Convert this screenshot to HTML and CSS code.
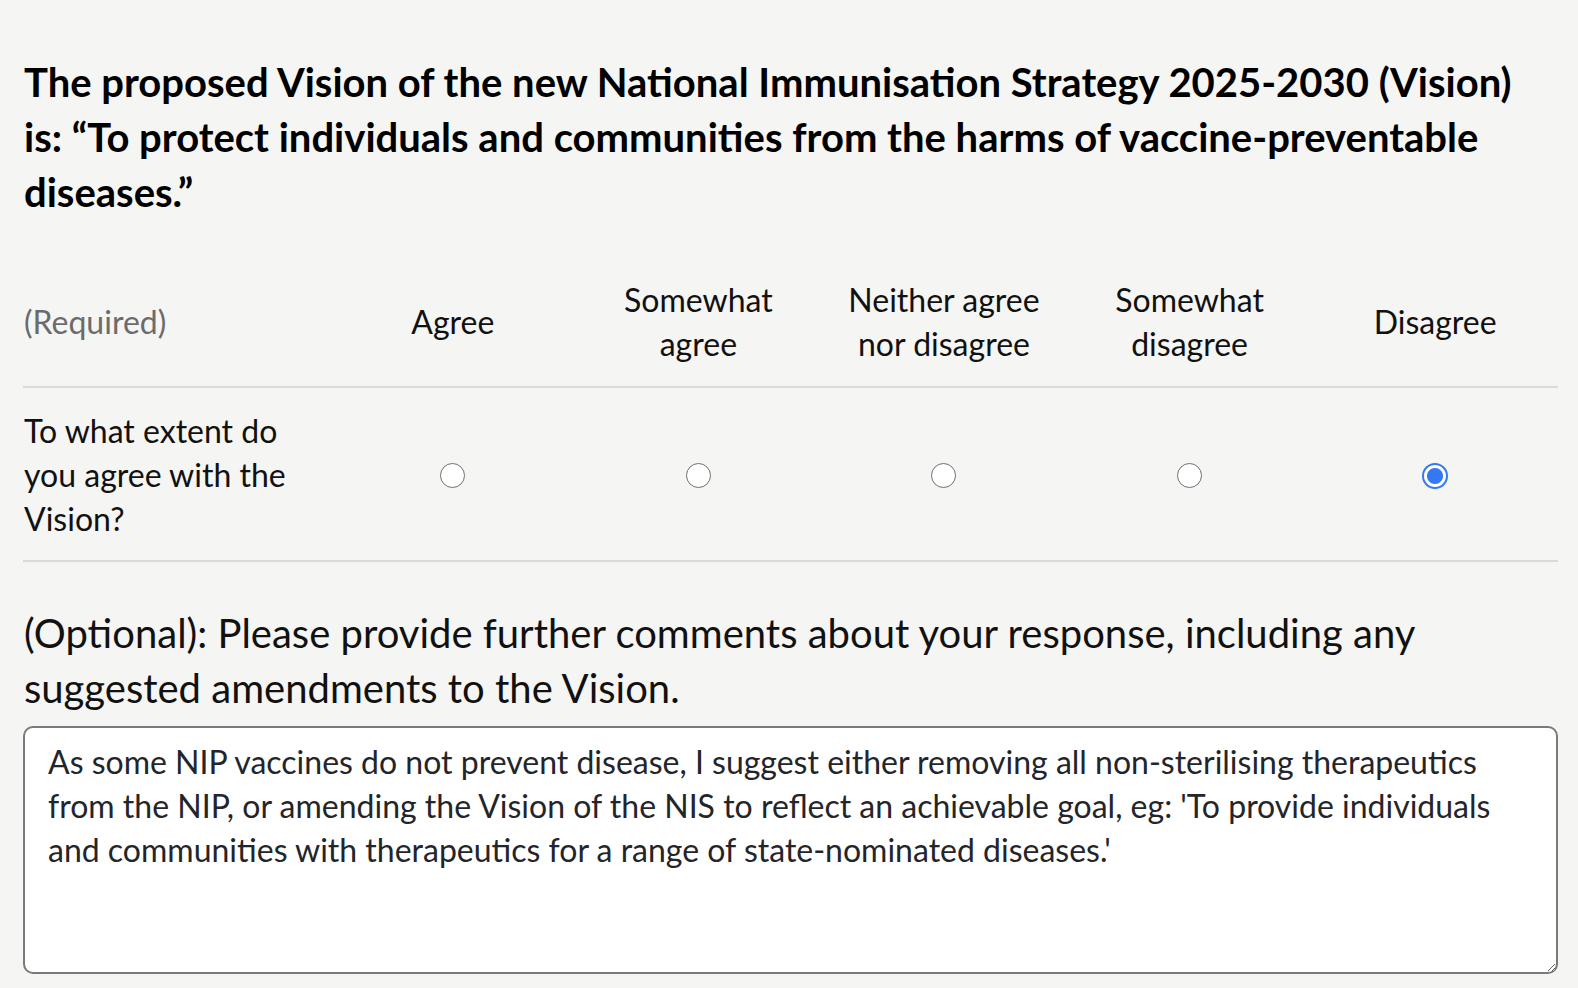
FILE: index.html
```html
<!DOCTYPE html>
<html lang="en">
<head>
<meta charset="utf-8">
<title>Vision question</title>
<link rel="stylesheet" href="styles.css">
</head>
<body>
<main class="question">
  <h2 class="question-title">The proposed Vision of the new National Immunisation Strategy 2025-2030 (Vision) is: “To protect individuals and communities from the harms of vaccine-preventable diseases.”</h2>

  <table class="likert">
    <colgroup>
      <col class="col-label">
      <col class="col-opt"><col class="col-opt"><col class="col-opt"><col class="col-opt"><col class="col-opt">
    </colgroup>
    <thead>
      <tr>
        <th class="req">(Required)</th>
        <th>Agree</th>
        <th>Somewhat<br>agree</th>
        <th>Neither agree<br>nor disagree</th>
        <th>Somewhat<br>disagree</th>
        <th>Disagree</th>
      </tr>
    </thead>
    <tbody>
      <tr>
        <td class="row-label">To what extent do you agree with the Vision?</td>
        <td><input class="radio" type="radio" name="vision" aria-label="Agree"></td>
        <td><input class="radio" type="radio" name="vision" aria-label="Somewhat agree"></td>
        <td><input class="radio" type="radio" name="vision" aria-label="Neither agree nor disagree"></td>
        <td><input class="radio" type="radio" name="vision" aria-label="Somewhat disagree"></td>
        <td><input class="radio" type="radio" name="vision" aria-label="Disagree" checked></td>
      </tr>
    </tbody>
  </table>

  <label class="comment-label" for="comments">(Optional): Please provide further comments about your response, including any suggested amendments to the Vision.</label>
  <textarea id="comments" class="comment-box">As some NIP vaccines do not prevent disease, I suggest either removing all non-sterilising therapeutics from the NIP, or amending the Vision of the NIS to reflect an achievable goal, eg: 'To provide individuals and communities with therapeutics for a range of state-nominated diseases.'</textarea>
</main>
</body>
</html>
```

FILE: styles.css
```css
html, body {
  margin: 0;
  padding: 0;
  background: #f5f5f3;
}

body {
  font-family: Lato, "Open Sans", sans-serif;
  color: #111;
}

.question {
  padding: 55px 20px 0 23px;
  display: flex;
  flex-direction: column;
}

.question-title {
  margin: 0 30px 38px 1px;
  font-size: 40px;
  line-height: 55px;
  font-weight: 700;
  color: #000;
}

.likert {
  width: 100%;
  border-collapse: collapse;
  table-layout: fixed;
}

.col-label { width: 307px; }

.likert th {
  font-weight: 400;
  font-size: 32px;
  line-height: 44px;
  color: #111;
  text-align: center;
  vertical-align: middle;
  padding: 20px 0;
  border-bottom: 2px solid #dadad8;
}

.likert th.req {
  text-align: left;
  color: #6b6b6b;
  padding-left: 1px;
}

.likert td {
  font-size: 32px;
  line-height: 44px;
  text-align: center;
  vertical-align: middle;
  padding: 21px 0 19px;
  border-bottom: 2px solid #dadad8;
}

.likert td.row-label {
  text-align: left;
  padding-left: 1px;
  padding-right: 20px;
  color: #111;
}

.radio {
  appearance: none;
  -webkit-appearance: none;
  margin: 0 0 6px;
  width: 25px;
  height: 25px;
  border: 1.5px solid #707070;
  border-radius: 50%;
  background: #fff;
  vertical-align: middle;
  box-sizing: border-box;
}

.radio:checked {
  border: 2.5px solid #3478f6;
  background: radial-gradient(circle, #3478f6 0 7.5px, #fff 8.5px);
  width: 26px;
  height: 26px;
}

.comment-label {
  margin: 44px 0 10px 1px;
  font-size: 40px;
  line-height: 55px;
  color: #111;
}

.comment-box {
  box-sizing: border-box;
  width: 100%;
  height: 248px;
  margin: 0;
  padding: 12px 23px;
  border: 2px solid #7a7a7a;
  border-radius: 10px;
  background: #fff;
  font-family: Lato, "Open Sans", sans-serif;
  font-size: 32px;
  line-height: 44px;
  color: #23252a;
  resize: both;
}
```
